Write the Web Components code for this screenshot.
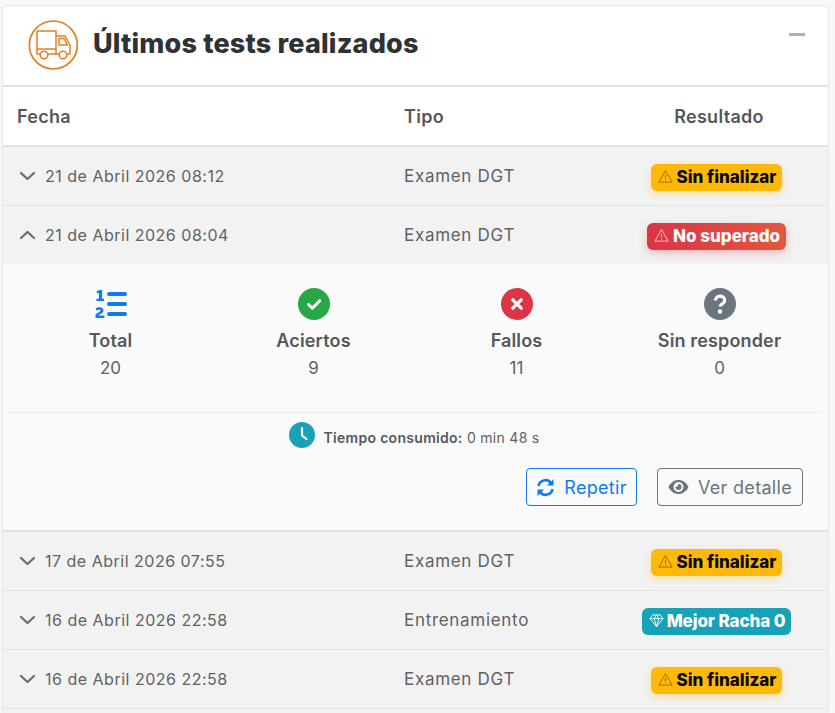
<!DOCTYPE html>
<html lang="es">
<head>
<meta charset="utf-8">
<title>Últimos tests</title>
<style>
  html, body { height: 100%; overflow: hidden; }
  body {
    margin: 0;
    padding: 6px 7px 0 3px;
    box-sizing: border-box;
    background: #f8f8f8;
    font-family: Inter, "Liberation Sans", sans-serif;
    color: #595c5f;
  }
</style>
</head>
<body>
<tests-card>
  <span slot="title">Últimos tests realizados</span>
  <table-head></table-head>
  <test-row date="21 de Abril 2026 08:12" type="Examen DGT" status="pending"></test-row>
  <test-row date="21 de Abril 2026 08:04" type="Examen DGT" status="failed" open></test-row>
  <test-detail total="20" ok="9" ko="11" blank="0" time="0 min 48 s"></test-detail>
  <test-row date="17 de Abril 2026 07:55" type="Examen DGT" status="pending"></test-row>
  <test-row date="16 de Abril 2026 22:58" type="Entrenamiento" status="streak"></test-row>
  <test-row date="16 de Abril 2026 22:58" type="Examen DGT" status="pending"></test-row>
</tests-card>

<script>
const WARN = `<svg viewBox="0 0 16 16" width="15" height="15" fill="none" stroke="currentColor" stroke-width=".9" stroke-linejoin="round"><path d="M8 1.6 15 14H1z"/><path d="M8 6v4.4M8 11.6v.9"/></svg>`;
const GEM = `<svg viewBox="0 0 16 16" width="15" height="15" fill="none" stroke="currentColor" stroke-width="1" stroke-linejoin="round"><path d="M4 2h8l3 4-7 8.5L1 6zM1 6h14M5.500 6 8 14.500 10.500 6 8 2 5.500 6"/></svg>`;

class TestsCard extends HTMLElement {
  constructor() {
    super();
    this.attachShadow({ mode: 'open' }).innerHTML = `
      <style>
        :host { display: block; background: #fff; box-shadow: 0 0 2px rgba(0,0,0,.22); border-radius: 4px 4px 0 0; }
        header { display: flex; align-items: center; height: 79px; padding-left: 25px; border-bottom: 2px solid #e3e3e3; position: relative; }
        .logo { width: 50px; height: 50px; flex: none; margin: -2px 15px 0 0; }
        h1 { margin: -5px 0 0; font-size: 27px; font-weight: 800; color: #2f3235; letter-spacing: .18px; }
        .min { position: absolute; right: 23px; top: 27px; width: 16px; height: 3px; background: #b0b0b0; }
        .filler { height: 4px; background: #f2f2f2; }
      </style>
      <header>
        <svg class="logo" viewBox="0 0 50 50" fill="none" stroke="#e67e22" stroke-width="1.500" stroke-linejoin="round">
          <circle cx="25.300" cy="25" r="24" stroke-width="1.700"/>
          <path d="M9 11H28V34H20M9 11V34H12"/>
          <path d="M9 29H28"/>
          <path d="M28 16H37L42 25V34H39M28 34H31"/>
          <path d="M31 18.500H36L39.500 25H31z"/>
          <circle cx="16" cy="35" r="3.800"/><circle cx="35" cy="35" r="3.800"/>
        </svg>
        <h1><slot name="title"></slot></h1>
        <div class="min"></div>
      </header>
      <slot></slot>
      <div class="filler"></div>`;
  }
}

class TableHead extends HTMLElement {
  constructor() {
    super();
    this.attachShadow({ mode: 'open' }).innerHTML = `
      <style>
        :host { display: grid; grid-template-columns: 387px 220px 218px; align-items: center; height: 58px; border-bottom: 2px solid #e3e3e3; background: #fff;
          font-size: 18px; font-weight: 600; color: #55585b; letter-spacing: .3px; }
        .date, .type { padding-left: 14px; }
        .res { text-align: center; }
      </style>
      <div class="date">Fecha</div><div class="type">Tipo</div><div class="res">Resultado</div>`;
  }
}

class StatusBadge extends HTMLElement {
  constructor() {
    super();
    this.attachShadow({ mode: 'open' });
  }
  connectedCallback() {
    const kinds = {
      pending: { text: 'Sin finalizar', icon: WARN, cls: 'pending' },
      failed: { text: 'No superado', icon: WARN, cls: 'failed' },
      streak: { text: 'Mejor Racha 0', icon: GEM, cls: 'streak' }
    };
    const k = kinds[this.getAttribute('kind')];
    this.shadowRoot.innerHTML = `
      <style>
        :host { display: inline-flex; align-items: center; gap: 4px; height: 27px; margin-top: 2px; padding: 0 6px 0 7px; border-radius: 6px; box-sizing: border-box; font-size: 17px; font-weight: 800; white-space: nowrap; }
        :host(.pending) { background: #ffb906; color: #0a0a0a; box-shadow: 0 3px 8px rgba(255,185,6,.35); }
        :host(.failed) { background: linear-gradient(90deg, #dc3545, #e4553f); color: #fff; box-shadow: 0 3px 8px rgba(220,53,69,.3); }
        :host(.streak) { background: #17a2b8; color: #fff; gap: 3px; letter-spacing: -.1px; }
        svg { flex: none; margin-top: -2px; }
        :host(.pending) svg { color: #8a6408; }
        :host(.failed) svg { color: #f9d5d8; }
      </style>
      ${k.icon}<span>${k.text}</span>`;
    this.classList.add(k.cls);
  }
}

class TestRow extends HTMLElement {
  constructor() {
    super();
    this.attachShadow({ mode: 'open' });
  }
  connectedCallback() {
    const open = this.hasAttribute('open');
    const chev = open ? 'M2 10 8.500 4 15 10' : 'M2 4l6.500 6L15 4';
    this.shadowRoot.innerHTML = `
      <style>
        :host { display: grid; grid-template-columns: 387px 220px 218px; align-items: center; height: 58px; background: #f2f2f2; border-bottom: 1px solid #e4e4e4; font-size: 16px; color: #5f6265; }
        .date { display: flex; align-items: center; gap: 9px; padding-left: 16px; letter-spacing: .5px; }
        .date svg { flex: none; }
        .type { padding-left: 14px; font-size: 17px; letter-spacing: .7px; }
        .res { display: flex; justify-content: center; padding-right: 5px; }
        :host([open]) { border-bottom: 0; }
      </style>
      <div class="date">
        <svg width="17" height="14" viewBox="0 0 17 14" fill="none" stroke="#6b6e71" stroke-width="2.300" stroke-linecap="round" stroke-linejoin="round"><path d="${chev}"/></svg>
        <span>${this.getAttribute('date')}</span>
      </div>
      <div class="type">${this.getAttribute('type')}</div>
      <div class="res"><status-badge kind="${this.getAttribute('status')}"></status-badge></div>`;
  }
}

class StatItem extends HTMLElement {
  constructor() {
    super();
    this.attachShadow({ mode: 'open' }).innerHTML = `
      <style>
        :host { display: flex; flex-direction: column; align-items: center; }
        .icon { height: 32px; }
        .label { margin-top: 8px; font-size: 18px; font-weight: 600; line-height: 25px; color: #55585b; letter-spacing: .15px; }
        .value { margin-top: 3px; font-size: 17px; line-height: 25px; color: #5f6265; }
      </style>
      <div class="icon"><slot></slot></div>
      <div class="label"></div>
      <div class="value"></div>`;
  }
  connectedCallback() {
    this.shadowRoot.querySelector('.label').textContent = this.getAttribute('label');
    this.shadowRoot.querySelector('.value').textContent = this.getAttribute('value');
  }
}

class ActionButton extends HTMLElement {
  constructor() {
    super();
    this.attachShadow({ mode: 'open' }).innerHTML = `
      <style>
        :host { display: inline-flex; align-items: center; justify-content: center; gap: 9px; height: 38px; box-sizing: border-box; border: 1px solid currentColor; border-radius: 4px; font-size: 18px; letter-spacing: .3px; }
        :host([tone=blue]) { color: #0d7bf2; width: 111px; }
        :host([tone=grey]) { color: #6c757d; width: 146px; }
        ::slotted(svg) { flex: none; }
      </style>
      <slot name="icon"></slot><slot></slot>`;
  }
}

class TestDetail extends HTMLElement {
  constructor() {
    super();
    this.attachShadow({ mode: 'open' });
  }
  connectedCallback() {
    const a = n => this.getAttribute(n);
    this.shadowRoot.innerHTML = `
      <style>
        :host { display: block; background: #fafafa; border-bottom: 2px solid #e3e3e3; padding: 24px 7px 0 5px; height: 242px; }
        .stats { display: grid; grid-template-columns: repeat(4, 203px); height: 124px; border-bottom: 1px solid #ebebeb; }
        .time { display: flex; align-items: center; justify-content: center; gap: 8px; height: 48px; font-size: 14px; letter-spacing: .3px; color: #5f6265; }
        .time b { font-weight: 600; color: #55585b; }
        .time svg { margin-top: -4px; }
        .actions { display: flex; justify-content: flex-end; gap: 20px; padding-right: 18px; margin-top: 7px; }
        stat-item { padding-left: 2px; }
      </style>
      <div class="stats">
        <stat-item label="Total" value="${a('total')}">
          <svg width="34" height="32" viewBox="0 0 34 32" fill="#0d7bf2">
            <rect x="13" y="4" width="20" height="4" rx="2"/><rect x="13" y="14" width="20" height="4" rx="2"/><rect x="13" y="24" width="20" height="4" rx="2"/>
            <path d="M2.500 3.500 5.500 2h2.600v8.700H10V13H2.500v-2.300h2.400V4.800L3.300 5.500z"/>
            <path d="M1.500 30v-2.400c0-2.500 5-3.400 5-5 0-1.400-2.400-1.200-3.800.1l-1.100-2.100c2.300-1.900 7.900-2 7.900 1.800 0 2.900-4.100 3.400-4.900 5H10.400V30z"/>
          </svg>
        </stat-item>
        <stat-item label="Aciertos" value="${a('ok')}">
          <svg width="32" height="32" viewBox="0 0 32 32"><circle cx="16" cy="16" r="16" fill="#28a745"/><path d="M10.500 16.500l3.800 3.800 7.500-7.600" fill="none" stroke="#fff" stroke-width="3" stroke-linecap="round" stroke-linejoin="round"/></svg>
        </stat-item>
        <stat-item label="Fallos" value="${a('ko')}">
          <svg width="32" height="32" viewBox="0 0 32 32"><circle cx="16" cy="16" r="16" fill="#dc3545"/><path d="M11.800 11.800l8.400 8.400m0-8.400-8.400 8.400" fill="none" stroke="#fff" stroke-width="3.200" stroke-linecap="round"/></svg>
        </stat-item>
        <stat-item label="Sin responder" value="${a('blank')}">
          <svg width="32" height="32" viewBox="0 0 32 32"><circle cx="16" cy="16" r="16" fill="#6c757d"/><path d="M11.500 12.500c0-5.800 9.200-5.800 9.200-.1 0 3.400-4.600 3.300-4.600 6.100" fill="none" stroke="#fff" stroke-width="3.200"/><circle cx="16" cy="23.500" r="2.200" fill="#fff"/></svg>
        </stat-item>
      </div>
      <div class="time">
        <svg width="26" height="26" viewBox="0 0 26 26"><circle cx="13" cy="13" r="13" fill="#17a2b8"/><path d="M13 6v7.500l4.500 3.500" fill="none" stroke="#fff" stroke-width="2.200" stroke-linecap="round" stroke-linejoin="round"/></svg>
        <span><b>Tiempo consumido:</b> ${a('time')}</span>
      </div>
      <div class="actions">
        <action-button tone="blue">
          <svg slot="icon" width="19" height="19" viewBox="0 0 19 19" fill="none" stroke="currentColor" stroke-width="2.600"><path d="M2.500 8A7 7 0 0 1 15 5M16.500 11A7 7 0 0 1 4 14"/><path d="M17.500 1v6.500H11L17.500 1zM1.500 18v-6.500H8L1.500 18z" fill="currentColor" stroke="none"/></svg>
          Repetir
        </action-button>
        <action-button tone="grey">
          <svg slot="icon" width="21" height="16" viewBox="0 0 21 16"><path fill-rule="evenodd" fill="currentColor" d="M.5 8C2.500 3.700 6.200 1 10.500 1s8 2.700 10 7c-2 4.300-5.700 7-10 7S2.500 12.300.5 8zm10 5a5 5 0 1 0 0-10 5 5 0 0 0 0 10z"/><path fill="currentColor" d="M10.500 5a3 3 0 1 1-3 3c.9.500 2.600-.9 3-3z"/></svg>
          Ver detalle
        </action-button>
      </div>`;
  }
}

customElements.define('tests-card', TestsCard);
customElements.define('table-head', TableHead);
customElements.define('status-badge', StatusBadge);
customElements.define('test-row', TestRow);
customElements.define('stat-item', StatItem);
customElements.define('action-button', ActionButton);
customElements.define('test-detail', TestDetail);
</script>
</body>
</html>
